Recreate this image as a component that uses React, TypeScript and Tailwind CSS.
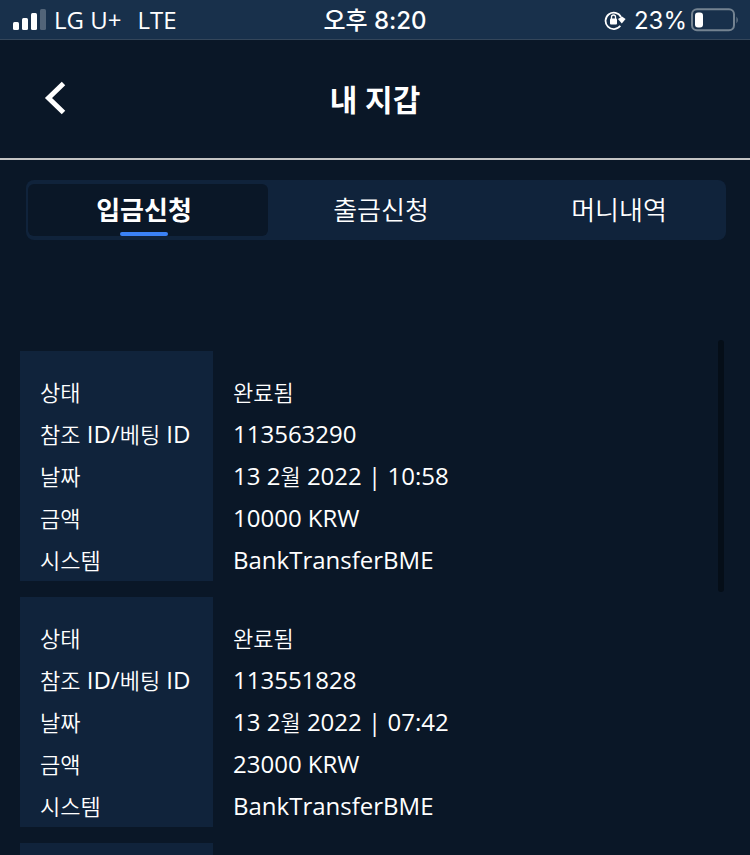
import type { ReactNode } from "react";

const tabs = [
  { label: "입금신청", active: true, box: "pr-2" },
  { label: "출금신청", active: false, box: "" },
  { label: "머니내역", active: false, box: "pl-5" },
];

const records = [
  { status: "완료됨", id: "113563290", date: "13 2월 2022 | 10:58", amount: "10000 KRW", system: "BankTransferBME" },
  { status: "완료됨", id: "113551828", date: "13 2월 2022 | 07:42", amount: "23000 KRW", system: "BankTransferBME" },
];

// Hangul runs a size smaller than the Latin text beside it
function Mixed({ text }: { text: string }) {
  const parts = text.split(/([\uac00-\ud7a3]+)/).filter(Boolean);
  return <>{parts.map((p, i) => (/[\uac00-\ud7a3]/.test(p) ? <span key={i} className="text-[22px] font-[350]">{p}</span> : p))}</>;
}

function Row({ label, value, first }: { label: string; value: ReactNode; first?: boolean }) {
  const pad = first ? "pt-5" : "";
  return (
    <>
      <dt className={`bg-[#10233b] pl-5 whitespace-nowrap ${pad}`}><Mixed text={label} /></dt>
      <dd className={`pl-5 ${pad}`}>{value}</dd>
    </>
  );
}

function StatusBar() {
  return (
    <div className="grid h-10 shrink-0 grid-cols-3 items-center border-b border-[#34465a] bg-[#18304b] font-['Inter','Noto_Sans_CJK_KR',sans-serif] text-2xl leading-6">
      <div className="flex items-center pl-3 font-['Open_Sans',sans-serif]">
        <svg width="34" height="22" viewBox="0 0 34 22" fill="#fff" aria-hidden="true">
          <rect x="1" y="13" width="6" height="8" rx="1.5" />
          <rect x="10" y="9" width="6" height="12" rx="1.5" />
          <rect x="19" y="4" width="6" height="17" rx="1.5" />
          <rect x="28" y="0" width="6" height="21" rx="1.5" opacity=".25" />
        </svg>
        <span className="ml-2">LG U+</span>
        <span className="ml-4">LTE</span>
      </div>
      <div className="pt-0.5 text-center font-medium">오후 8:20</div>
      <div className="flex items-center justify-end pr-[11px]">
        <svg width="22" height="20" viewBox="0 0 22 20" fill="none" aria-hidden="true">
          <path d="M16.3 15.8A8.2 8.2 0 1 1 17 7" stroke="#fff" strokeWidth="1.8" />
          <path d="M14 9L18 6.5L21.6 9L17.8 13.5Z" fill="#fff" />
          <rect x="6" y="8.5" width="7" height="6" rx="1" fill="#fff" />
          <path d="M7.5 9V7a2 2 0 0 1 4 0v2" stroke="#fff" strokeWidth="1.3" />
        </svg>
        <span className="ml-2 pt-0.5">23%</span>
        <svg className="ml-1" width="48" height="24" viewBox="0 0 48 24" fill="none" aria-hidden="true">
          <rect x="1" y="1.2" width="42" height="21" rx="5" stroke="#748391" strokeWidth="2" />
          <rect x="4" y="4.5" width="8" height="15" rx="3" fill="#fff" />
          <path d="M45.5 8.5Q48 12 45.5 15.5Z" fill="#748391" />
        </svg>
      </div>
    </div>
  );
}

export default function App() {
  return (
    <div className="flex h-screen flex-col overflow-hidden bg-[#0a1727] font-['Open_Sans','Noto_Sans_CJK_KR',sans-serif] text-white">
      <StatusBar />
      <header className="grid h-30 shrink-0 grid-cols-[100px_1fr_100px] items-center border-b-2 border-[#c4c4c4]">
        <button type="button" aria-label="뒤로" className="flex h-12 items-center pl-11">
          <svg width="24" height="36" viewBox="0 0 24 36" fill="none" stroke="#fff" strokeWidth="5" aria-hidden="true">
            <path d="M19.5 2.5L4.5 17L19.5 31.5" />
          </svg>
        </button>
        <h1 className="pt-0.5 text-center text-[30px] leading-10 font-bold">내 지갑</h1>
      </header>

      <nav className="mx-6 mt-5 ml-[26px] grid h-15 shrink-0 grid-cols-[240fr_226fr_230fr] rounded-lg bg-[#10233b] px-0.5 py-1">
        {tabs.map((t) => (
          <button
            key={t.label}
            type="button"
            className={`rounded-md text-[26px] leading-[52px] ${t.box} ${t.active ? "bg-[#0a1727] font-bold" : "font-[350]"}`}
          >
            <span className="relative inline-block">
              {t.label}
              {t.active && <span className="absolute inset-x-0 bottom-0 mx-auto h-1 w-12 rounded-full bg-[#3b82f6]" />}
            </span>
          </button>
        ))}
      </nav>

      <main className="relative mt-[100px] flex flex-1 flex-col gap-4 px-5 pt-[11px]">
        {records.map((r) => (
          <dl key={r.id} className="grid grid-cols-[193px_1fr] text-2xl leading-[42px]">
            <Row label="상태" value={<Mixed text={r.status} />} first />
            <Row label="참조 ID/베팅 ID" value={r.id} />
            <Row label="날짜" value={<Mixed text={r.date} />} />
            <Row label="금액" value={r.amount} />
            <Row label="시스템" value={r.system} />
          </dl>
        ))}
        <div className="w-[193px] flex-1 bg-[#10233b]" />
        <div className="absolute top-0 right-[26px] h-[252px] w-1.5 rounded-full bg-[#050e18]" />
      </main>
    </div>
  );
}
